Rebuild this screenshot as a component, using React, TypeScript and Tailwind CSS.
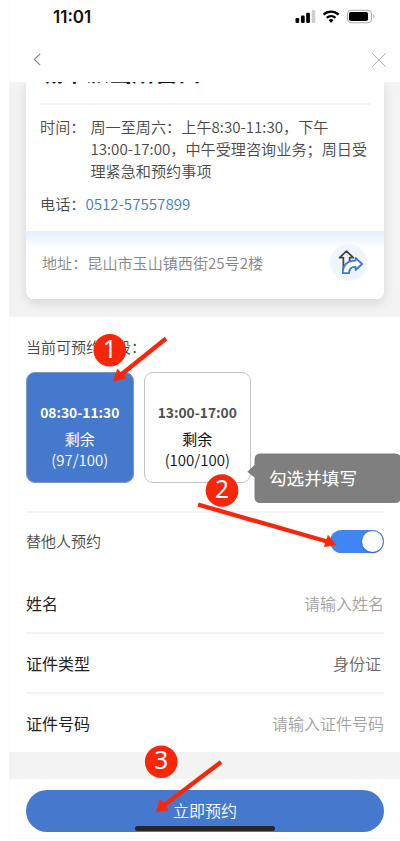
import type { ReactNode } from 'react';

const slots = [
  { id: 'am', time: '08:30-11:30', left: '(97/100)', selected: true },
  { id: 'pm', time: '13:00-17:00', left: '(100/100)', selected: false },
];

// Form rows below the "book for someone else" switch
const fields = [
  { label: '姓名', value: '请输入姓名', filled: false },
  { label: '证件类型', value: '身份证', filled: true },
  { label: '证件号码', value: '请输入证件号码', filled: false },
];

function StatusBar() {
  return (
    <div className="flex h-[34px] items-center justify-between pl-[43px] pr-[25px]">
      <span className="font-['Inter',sans-serif] text-[17px] font-semibold leading-[20px] text-[#111]">11:01</span>
      <svg width="80" height="16" viewBox="295 9 80 16">
        <rect x="295.5" y="18" width="3.7" height="5" rx="1.2" />
        <rect x="301" y="15.5" width="3.7" height="7.5" rx="1.2" />
        <rect x="306.2" y="12.7" width="3.7" height="10.3" rx="1.2" />
        <rect x="311.6" y="10" width="3.7" height="13" rx="1.2" fill="#cfcfcf" />
        <g fill="none" stroke="#000" strokeWidth="2.3">
          <path d="M323.6 14.6a11 11 0 0 1 15 0" />
          <path d="M326.7 17.8a6.5 6.5 0 0 1 8.8 0" />
        </g>
        <path d="M328.6 20.1a4 4 0 0 1 5 0L331.1 23Z" />
        <rect x="347.5" y="10.2" width="24" height="12.6" rx="3.8" fill="#fff" stroke="#aaa" strokeWidth="1.1" />
        <rect x="349" y="12" width="19" height="9" rx="1.8" />
        <path d="M373.3 14.5v4a2.3 2.3 0 0 0 0-4Z" fill="#aaa" />
      </svg>
    </div>
  );
}

function NavBar() {
  return (
    <div className="flex h-[48px] items-center justify-between pl-[23px] pr-[14px] pt-[3px]">
      <svg width="8" height="13" viewBox="0 0 8 13" fill="none" stroke="#808080" strokeWidth="1.1">
        <path d="M7.2 .8 1.2 6.5l6 5.7" />
      </svg>
      <svg width="14" height="14" viewBox="0 0 14 14" fill="none" stroke="#ababab" strokeWidth="1">
        <path d="M.5 .5l13 13M13.5 .5l-13 13" />
      </svg>
    </div>
  );
}

function InfoRow({ label, children }: { label: string; children: ReactNode }) {
  return (
    <div className="flex text-[15.15px] font-[350] leading-[22px] text-[#484848]">
      <span className="shrink-0">{label}</span>
      {children}
    </div>
  );
}

function OfficeCard() {
  return (
    <section className="-ml-px flex h-[235px] flex-col overflow-hidden bg-[#f3f3f3] pl-[17px] pr-[16px]">
      <div className="h-[217px] rounded-b-[8px] bg-white shadow-[0_4px_12px_rgba(0,0,0,0.12)]">
        <div className="mx-[14px] flex h-[23px] items-end border-b-2 border-[#f3f3f3]">
          {/* title is scrolled under the nav bar */}
          <h1 className="-translate-y-[15px] whitespace-nowrap text-[23px] font-bold leading-[34px] text-[#111]">
            城中派出所窗口
          </h1>
        </div>
        <div className="flex h-[126px] flex-col gap-[11px] pl-[14px] pr-[10px] pt-[10px]">
          <InfoRow label="时间：">
            <p className="ml-[5px]">
              周一至周六：上午8:30-11:30，下午
              <br />
              13:00-17:00，中午受理咨询业务；周日受
              <br />
              理紧急和预约事项
            </p>
          </InfoRow>
          <InfoRow label="电话：">
            <span className="text-[#4479ce]">0512-57557899</span>
          </InfoRow>
        </div>
        <div className="flex h-[68px] items-center justify-between rounded-b-[8px] bg-[linear-gradient(to_bottom,#e4eefd,#fff_18px)] pb-[6px] pl-[16px] pr-[17px]">
          <p className="text-[15.1px] font-[350] leading-[22px] text-[#858585]">地址：昆山市玉山镇西街25号2楼</p>
          <span className="flex size-[37px] items-center justify-center rounded-full bg-[#eff4fe]">
            <svg
              className="overflow-visible"
              width="26"
              height="26"
              viewBox="0 0 26 26"
              fill="#fff"
              strokeLinejoin="round"
              strokeWidth="1.8"
            >
              <path d="M7.4 21V8.6H3.6L10.5 2.2 17.3 8.6H13.6V21Z" stroke="#444" />
              <path d="M6.8 24.2C6.6 16 11.5 11.4 19.6 11.6V8.8L26 15l-6.4 6v-3.1c-4.4-.1-6.6 2.3-6.6 6.3Z" stroke="#3b78d8" />
            </svg>
          </span>
        </div>
      </div>
    </section>
  );
}

function TimeSlots() {
  return (
    <div className="flex gap-[10px]">
      {slots.map((slot) => (
        <div
          key={slot.id}
          className={`flex h-[111px] w-[107.5px] flex-col items-center rounded-[9px] border pt-[28px] ${
            slot.selected ? 'border-[#7c96bd] bg-[#4479ce] text-white' : 'border-[#c4c4c4] bg-white text-[#111]'
          }`}
        >
          <span
            className={`text-[13.8px] font-bold leading-[22px] ${slot.selected ? 'text-white' : 'text-[#505050]'}`}
          >
            {slot.time}
          </span>
          <span className="mt-[5px] text-[15px] leading-[22px]">剩余</span>
          <span className="text-[15px] font-[350] leading-[20px]">{slot.left}</span>
        </div>
      ))}
    </div>
  );
}

function Arrow({ shaft, head }: { shaft: string; head: string }) {
  return (
    <g fill="#fb2609" stroke="#fb2609">
      <path d={shaft} strokeWidth="4.3" />
      <path d={head} strokeWidth="0.6" />
    </g>
  );
}

function Step({ n, x, y }: { n: number; x: number; y: number }) {
  return (
    <g>
      <circle cx={x} cy={y} r="16.3" fill="#fb2609" />
      <text x={x} y={y + 7.5} textAnchor="middle" fill="#fff" className="font-['Noto_Sans',sans-serif] text-[24.5px]">
        {n}
      </text>
    </g>
  );
}

// Tutorial marks drawn over the screen
function Annotations() {
  return (
    <svg className="pointer-events-none absolute left-0 top-0" width="400" height="841" viewBox="0 0 400 841">
      <Step n={1} x={109.8} y={350.3} />
      <Step n={2} x={222} y={490.5} />
      <Step n={3} x={161.2} y={761.7} />
      <Arrow shaft="M166 338.5 120 375.5" head="M113.3 381 117.5 369 126 378.3Z" />
      <Arrow shaft="M198 504.5 328 541.8" head="M336 544.8 328 535.3 324.3 546.7Z" />
      <Arrow shaft="M221 762 163 806" head="M156.2 811.7 160.3 799.3 168.5 810Z" />
      <path
        d="M260.5 453.5H395Q401 453.5 401 459.5V497Q401 503 395 503H260.5Q254.5 503 254.5 497V477.5L247.3 471.7 254.5 465V459.5Q254.5 453.5 260.5 453.5Z"
        fill="#7f7f7f"
      />
      <text x="269" y="484.8" fill="#fff" className="text-[17.6px]">
        勾选并填写
      </text>
    </svg>
  );
}

export default function App() {
  return (
    <div className="relative h-[841px] w-[400px] overflow-hidden bg-white pl-[9px] font-['Noto_Sans_CJK_SC',sans-serif]">
      <div className="flex h-[839px] flex-col border-b border-l border-[#fafafa]">
        <header>
          <StatusBar />
          <NavBar />
        </header>
        <OfficeCard />
        <main className="flex h-[435px] flex-col pl-[16px] pr-[16px] pt-[19px]">
          <h2 className="text-[15px] font-[350] leading-[22px] text-[#484848]">当前可预约时段：</h2>
          <div className="mt-[14px]">
            <TimeSlots />
          </div>
          <div className="mt-[28px] flex h-[61px] items-center justify-between border-t-2 border-[#f3f3f3] pb-[2px]">
            <span className="pb-[1px] text-[15px] font-[350] leading-[22px] text-[#484848]">替他人预约</span>
            <span className="flex h-[23px] w-[54px] items-center justify-end rounded-full bg-[#4086f3] pr-px">
              <span className="size-[21px] rounded-full bg-white shadow-[0_1px_2px_rgba(0,0,0,0.3)]" />
            </span>
          </div>
          <div className="flex flex-col">
            {fields.map((field) => (
              <div
                key={field.label}
                className="flex h-[60px] items-center justify-between border-t-2 border-[#f3f3f3] pb-[1px] text-[16px] leading-[24px] first:border-transparent"
              >
                <span className="text-[#222]">{field.label}</span>
                <span className={field.filled ? 'pr-[3px] font-[350] text-[#666]' : 'font-[350] text-[#a2a2a2]'}>
                  {field.value}
                </span>
              </div>
            ))}
          </div>
        </main>
        <div className="-ml-px h-[27px] bg-[#f3f3f3]" />
        <footer className="pl-[16px] pr-[16px] pt-[11px]">
          <button className="relative flex h-[42px] w-full items-center justify-center rounded-[21px] bg-[#4479ce] pb-[2px] text-[16px] font-[350] leading-[24px] text-white">
            立即预约
            <span className="absolute bottom-[1px] left-1/2 h-[5px] w-[140px] -translate-x-1/2 rounded-full bg-[#272727]" />
          </button>
        </footer>
      </div>
      <Annotations />
    </div>
  );
}
